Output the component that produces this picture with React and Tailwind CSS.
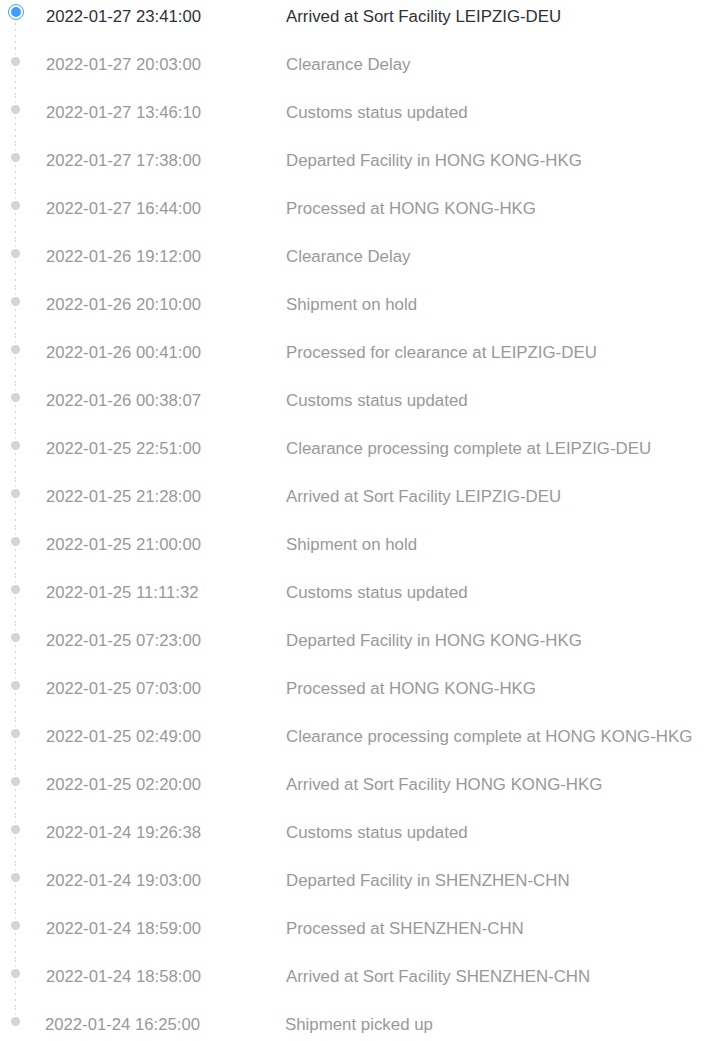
import React from 'react';

const events = [
  ['2022-01-27 23:41:00', 'Arrived at Sort Facility LEIPZIG-DEU'],
  ['2022-01-27 20:03:00', 'Clearance Delay'],
  ['2022-01-27 13:46:10', 'Customs status updated'],
  ['2022-01-27 17:38:00', 'Departed Facility in HONG KONG-HKG'],
  ['2022-01-27 16:44:00', 'Processed at HONG KONG-HKG'],
  ['2022-01-26 19:12:00', 'Clearance Delay'],
  ['2022-01-26 20:10:00', 'Shipment on hold'],
  ['2022-01-26 00:41:00', 'Processed for clearance at LEIPZIG-DEU'],
  ['2022-01-26 00:38:07', 'Customs status updated'],
  ['2022-01-25 22:51:00', 'Clearance processing complete at LEIPZIG-DEU'],
  ['2022-01-25 21:28:00', 'Arrived at Sort Facility LEIPZIG-DEU'],
  ['2022-01-25 21:00:00', 'Shipment on hold'],
  ['2022-01-25 11:11:32', 'Customs status updated'],
  ['2022-01-25 07:23:00', 'Departed Facility in HONG KONG-HKG'],
  ['2022-01-25 07:03:00', 'Processed at HONG KONG-HKG'],
  ['2022-01-25 02:49:00', 'Clearance processing complete at HONG KONG-HKG'],
  ['2022-01-25 02:20:00', 'Arrived at Sort Facility HONG KONG-HKG'],
  ['2022-01-24 19:26:38', 'Customs status updated'],
  ['2022-01-24 19:03:00', 'Departed Facility in SHENZHEN-CHN'],
  ['2022-01-24 18:59:00', 'Processed at SHENZHEN-CHN'],
  ['2022-01-24 18:58:00', 'Arrived at Sort Facility SHENZHEN-CHN'],
  ['2022-01-24 16:25:00', 'Shipment picked up'],
];

const dotted = 'w-px bg-[linear-gradient(to_bottom,#d4d4d4_0,#d4d4d4_2px,transparent_2px,transparent_6px)] bg-[length:1px_6px]';

function Marker({ first, last }) {
  return (
    <div className="flex w-[31px] shrink-0 flex-col items-center">
      {first ? (
        <div className="mt-1 flex h-4 w-4 rounded-full border-[1.5px] border-[#409eff] bg-white p-[2px]">
          <div className="flex-1 rounded-full bg-[#409eff]" />
        </div>
      ) : (
        <>
          <div className={`h-[7px] ${dotted}`} />
          <div className="mt-[2px] h-[9px] w-[9px] rounded-full bg-[#d3d4d6]" />
        </>
      )}
      {!last && <div className={`mt-[3px] flex-1 ${dotted}`} />}
    </div>
  );
}

export default function App() {
  return (
    <div className="w-[712px] bg-white font-['Liberation_Sans',Arial,sans-serif]">
      {events.map(([time, text], i) => {
        const first = i === 0;
        const last = i === events.length - 1;
        return (
          <div key={i} className="flex h-12">
            <Marker first={first} last={last} />
            <div
              className={`flex pt-[5px] leading-6 ${first ? 'text-[#303133]' : 'text-[#999]'} ${last ? '-ml-px' : ''}`}
            >
              <span className="w-[255px] pl-[15px] text-[16.7px]">{time}</span>
              <span className="text-[16.85px]">{text}</span>
            </div>
          </div>
        );
      })}
    </div>
  );
}
